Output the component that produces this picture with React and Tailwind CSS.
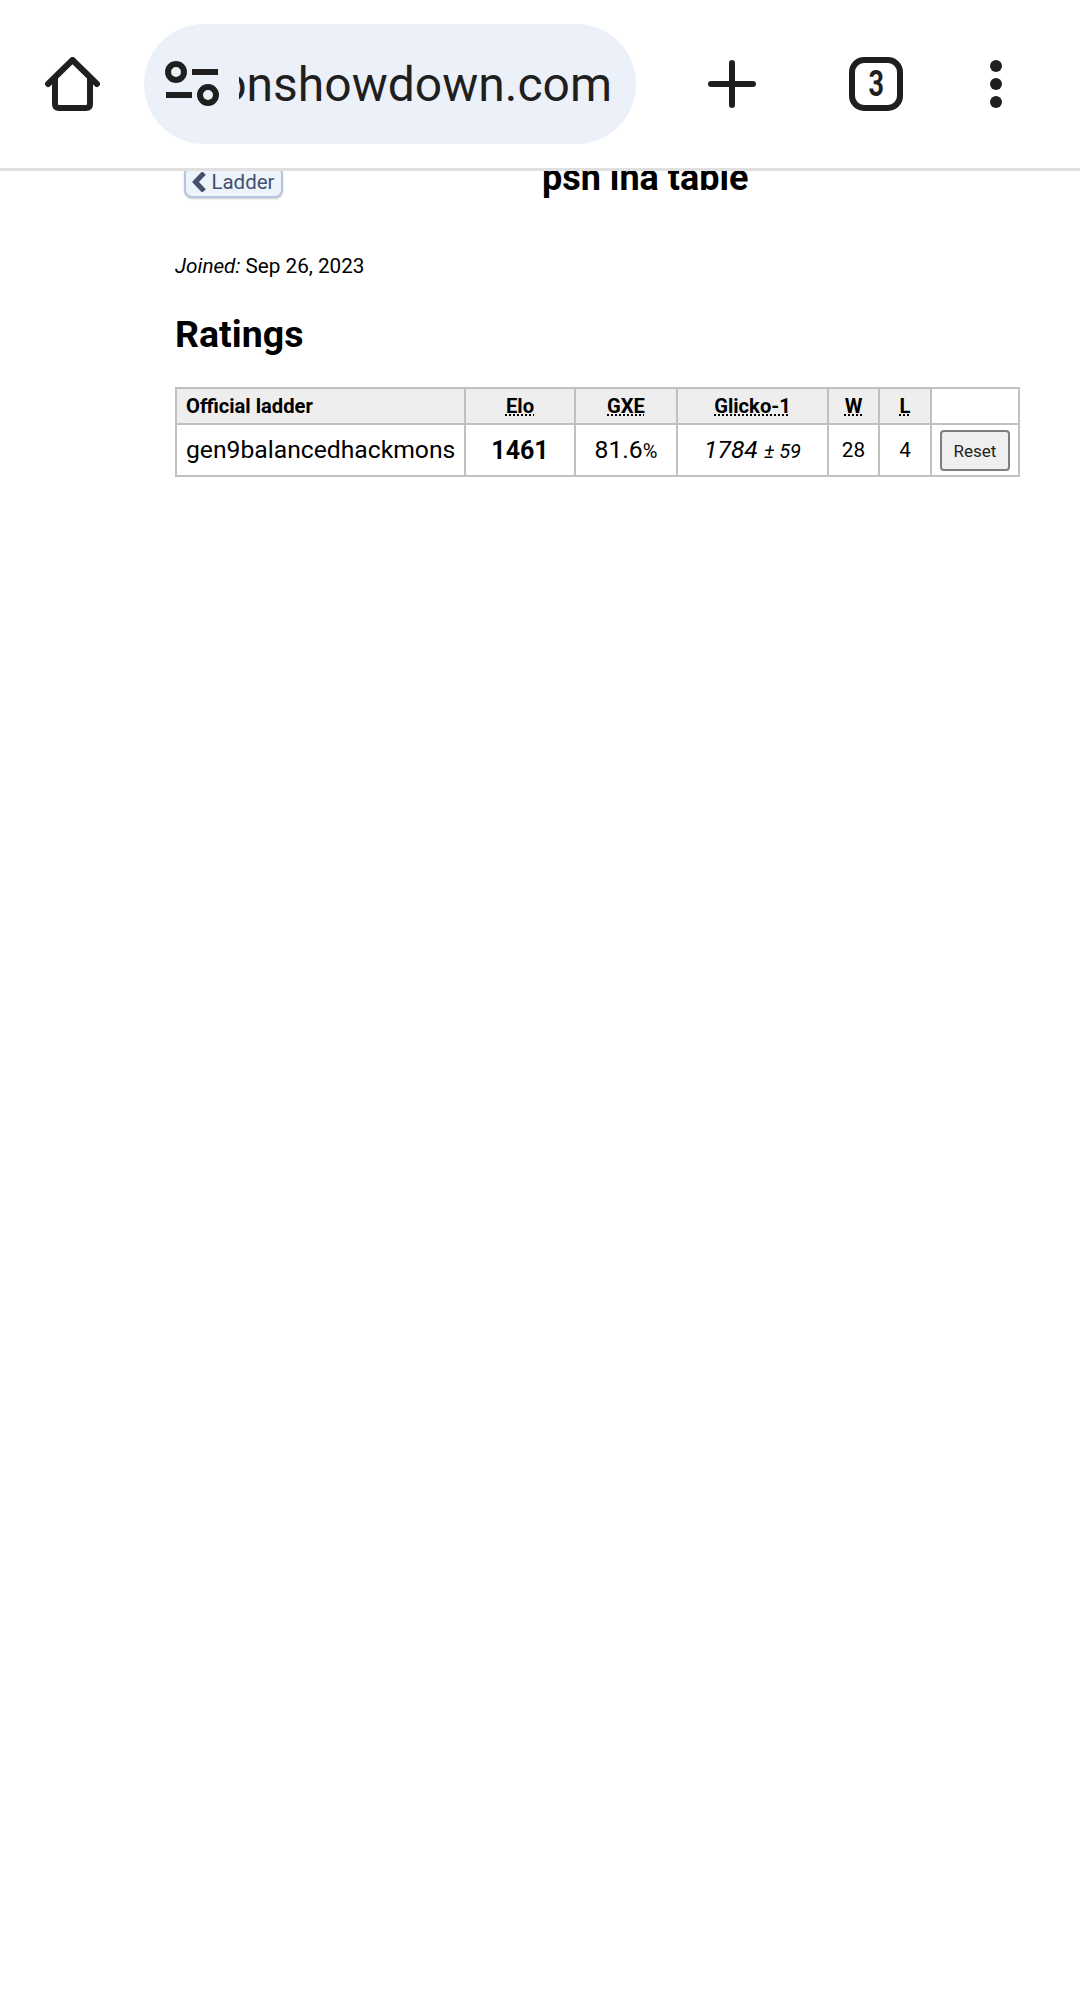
export default function App() {
  const th = "border-2 border-[#c0c0c0] bg-[#eeeeee] h-[36px] p-0 text-center font-bold text-[20.2px] text-black";
  const abbr = "underline decoration-dotted decoration-2 underline-offset-[2px]";
  const td = "border-2 border-[#c0c0c0] h-[52px] p-0 text-center text-black";
  return (
    <div className="w-[1080px] h-[2004px] overflow-hidden bg-white flex flex-col font-['Roboto',sans-serif]">
      <header className="relative z-10 h-[171px] shrink-0 bg-white border-b-[3px] border-[#e0e0e0] flex items-center">
        <svg className="ml-[45px] shrink-0" width="55" height="54" viewBox="0 0 55 54" fill="none" stroke="#1f1f1f" strokeWidth="6" strokeLinejoin="round" strokeLinecap="round">
          <path d="M3 27 L27.5 3 L52 27 M10 21 V47 Q10 51 14 51 H41 Q45 51 45 47 V21" />
        </svg>
        <div className="ml-[44px] w-[492px] h-[120px] rounded-[60px] bg-[#ecf1f9] flex items-center shrink-0">
          <svg className="ml-[21px] shrink-0" width="56" height="46" viewBox="0 0 56 46" fill="none" stroke="#1f1f1f" strokeWidth="6">
            <circle cx="11" cy="11" r="8" />
            <path d="M27 11 H53" />
            <path d="M1 34 H27" />
            <circle cx="43" cy="34" r="8" />
          </svg>
          <div className="ml-[18px] mt-[2px] w-[373px] overflow-hidden flex justify-end">
            <span className="text-[48px] leading-[60px] text-[#1f1f1f] whitespace-nowrap">pokemonshowdown.com</span>
          </div>
        </div>
        <svg className="ml-[72px] shrink-0" width="48" height="48" viewBox="0 0 48 48" fill="none" stroke="#1f1f1f" strokeWidth="6" strokeLinecap="round">
          <path d="M24 3 V45 M3 24 H45" />
        </svg>
        <div className="ml-[93px] w-[54px] h-[54px] shrink-0 rounded-[15px] border-[6px] border-[#1f1f1f] flex items-center justify-center">
          <span className="text-[36px] leading-none font-bold text-[#1f1f1f] scale-x-75">3</span>
        </div>
        <div className="ml-[87px] shrink-0 flex flex-col gap-[6px]">
          <div className="w-[12px] h-[12px] rounded-full bg-[#1f1f1f]" />
          <div className="w-[12px] h-[12px] rounded-full bg-[#1f1f1f]" />
          <div className="w-[12px] h-[12px] rounded-full bg-[#1f1f1f]" />
        </div>
      </header>
      <main className="flex-1 overflow-hidden">
        <div className="ml-[175px] w-[845px] mt-[-15px]">
          <div className="flex items-start">
            <a className="ml-[9px] mt-[10px] w-[99px] h-[32px] flex items-center justify-center gap-[5px] rounded-[8px] border-2 border-[#b4c6de] bg-[#edf3fb] shadow-[0_1px_2px_rgba(0,0,0,0.2)] text-[#44506e] text-[20.5px]">
              <svg width="14" height="20" viewBox="0 0 14 20" fill="none" stroke="#44506e" strokeWidth="5">
                <path d="M12 1 L3.5 10 L12 19" />
              </svg>
              <span>Ladder</span>
            </a>
            <h1 className="ml-[259px] text-[36px] leading-[44px] font-bold text-black whitespace-nowrap">psn ina table</h1>
          </div>
          <p className="mt-[52px] text-[20.7px] leading-[28px] text-black"><em>Joined:</em> Sep 26, 2023</p>
          <h2 className="mt-[32px] text-[37.5px] leading-[44px] font-bold text-black">Ratings</h2>
          <table className="mt-[31px] border-collapse table-fixed w-[843px]">
            <colgroup>
              <col className="w-[289px]" />
              <col className="w-[110px]" />
              <col className="w-[102px]" />
              <col className="w-[151px]" />
              <col className="w-[51px]" />
              <col className="w-[52px]" />
              <col className="w-[88px]" />
            </colgroup>
            <thead>
              <tr>
                <th className={th + " text-left pl-[9px]"}>Official ladder</th>
                <th className={th}><abbr className={abbr}>Elo</abbr></th>
                <th className={th}><abbr className={abbr}>GXE</abbr></th>
                <th className={th}><abbr className={abbr}>Glicko-1</abbr></th>
                <th className={th}><abbr className={abbr}>W</abbr></th>
                <th className={th}><abbr className={abbr}>L</abbr></th>
                <th className="border-2 border-[#c0c0c0] bg-white p-0"></th>
              </tr>
            </thead>
            <tbody>
              <tr>
                <td className={td + " !text-left pl-[9px] text-[24.7px] whitespace-nowrap"}>gen9balancedhackmons</td>
                <td className={td + " text-[25px] font-bold pt-[1px]"}>1461</td>
                <td className={td + " text-[24.7px]"}>81.6<small className="text-[20px]">%</small></td>
                <td className={td + " text-[24.7px] italic"}>1784 <small className="text-[20px]">± 59</small></td>
                <td className={td + " text-[20.7px] pt-[1px]"}>28</td>
                <td className={td + " text-[20.7px] pt-[1px]"}>4</td>
                <td className={td}>
                  <button className="w-[70px] h-[41px] pt-[3px] rounded-[4px] border-2 border-[#7e7e7e] bg-[#efefef] text-[17px] text-[#222222]">Reset</button>
                </td>
              </tr>
            </tbody>
          </table>
        </div>
      </main>
    </div>
  );
}
